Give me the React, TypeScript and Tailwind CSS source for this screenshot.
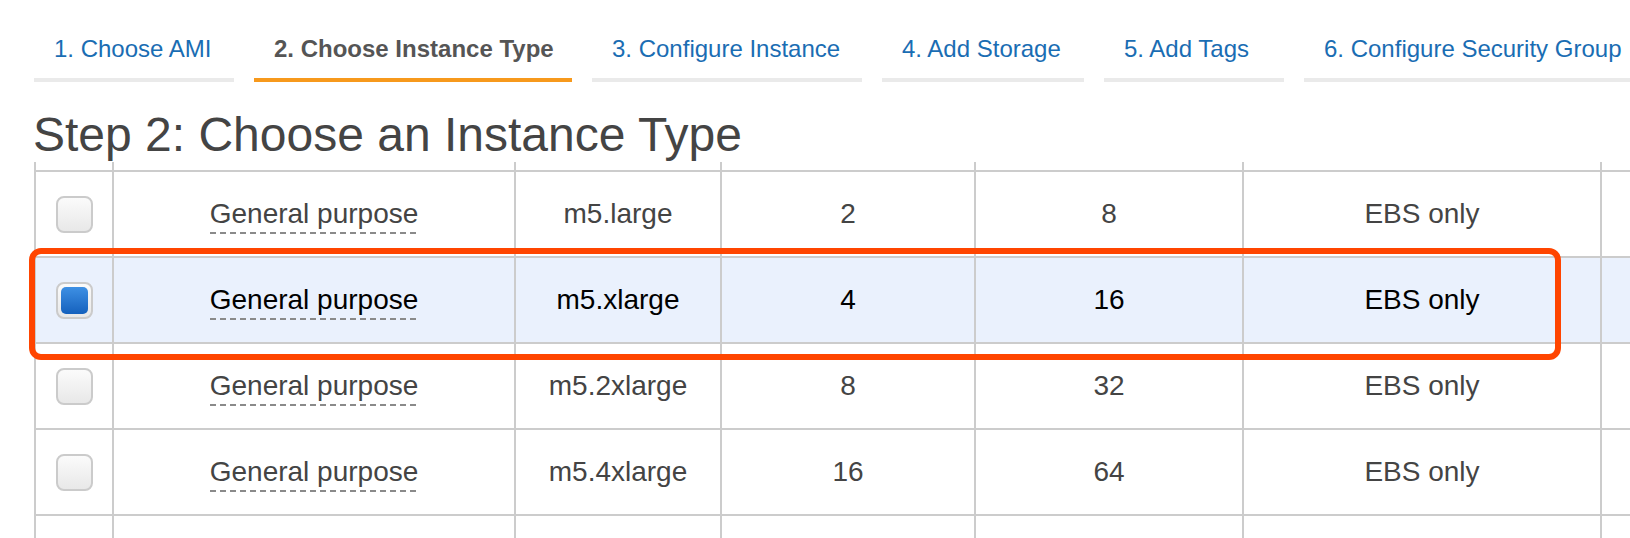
import React from "react";

const tabs = [
  { label: "1. Choose AMI", active: false, w: "w-[200px]" },
  { label: "2. Choose Instance Type", active: true, w: "w-[318px]" },
  { label: "3. Configure Instance", active: false, w: "w-[270px]" },
  { label: "4. Add Storage", active: false, w: "w-[202px]" },
  { label: "5. Add Tags", active: false, w: "w-[180px]" },
  { label: "6. Configure Security Group", active: false, w: "w-[340px]" },
];

const rows = [
  { type: "m5.large", cpu: "2", mem: "8", sel: false },
  { type: "m5.xlarge", cpu: "4", mem: "16", sel: true },
  { type: "m5.2xlarge", cpu: "8", mem: "32", sel: false },
  { type: "m5.4xlarge", cpu: "16", mem: "64", sel: false },
];

const grid =
  "grid grid-cols-[78px_402px_206px_254px_268px_358px_1fr]";
const cell = "border-l-2 border-[#cccccc] flex items-center justify-center";

function Checkbox({ checked }: { checked: boolean }) {
  return (
    <div className="w-[37px] h-[37px] rounded-[8px] border-2 border-[#cbcbcb] bg-linear-to-b from-[#fbfbfb] to-[#e8e8e8] p-[3px]">
      {checked && (
        <div className="w-full h-full rounded-[5px] bg-linear-to-b from-[#3e90e4] to-[#1461bd]" />
      )}
    </div>
  );
}

function Txt({ children, dashed }: { children: React.ReactNode; dashed?: boolean }) {
  return (
    <span
      className={
        "inline-block leading-[30px] pt-[4px] pb-[5px] whitespace-nowrap " +
        (dashed
          ? "bg-[repeating-linear-gradient(to_right,#8a8a8a_0px,#8a8a8a_6px,transparent_6px,transparent_10px)] bg-[length:100%_2px] bg-no-repeat bg-bottom"
          : "")
      }
    >
      {children}
    </span>
  );
}

export default function App() {
  return (
    <div className="relative w-[1630px] h-[538px] overflow-hidden bg-white font-['Liberation_Sans',Arial,sans-serif]">
      {/* Tabs */}
      <div className="flex gap-[20px] pl-[34px] pt-[35px] whitespace-nowrap">
        {tabs.map((t) => (
          <div
            key={t.label}
            className={
              "shrink-0 pl-[20px] pb-[15px] border-b-4 text-[24px] leading-[28px] " +
              t.w +
              " " +
              (t.active
                ? "border-[#f7991c] text-[#555555] font-bold"
                : "border-[#eaeaea] text-[#1a6db3]")
            }
          >
            {t.label}
          </div>
        ))}
      </div>

      {/* Heading */}
      <h1 className="mt-[26px] pl-[33px] text-[48px] leading-[54px] text-[#444444] font-normal whitespace-nowrap">
        Step 2: Choose an Instance Type
      </h1>

      {/* Table */}
      <div className="relative h-[376px] overflow-hidden pl-[34px] text-[28px]">
        <div className={grid + " h-[8px]"}>
          {Array.from({ length: 7 }).map((_, i) => (
            <div key={i} className="border-l-2 border-[#cccccc]" />
          ))}
        </div>
        {rows.map((r) => (
          <div
            key={r.type}
            className={
              grid +
              " h-[86px] border-t-2 border-[#cccccc] " +
              (r.sel ? "bg-[#eaf1fd] text-black" : "text-[#444444]")
            }
          >
            <div className={cell}>
              <Checkbox checked={r.sel} />
            </div>
            <div className={cell}>
              <Txt dashed>General purpose</Txt>
            </div>
            <div className={cell}>
              <Txt>{r.type}</Txt>
            </div>
            <div className={cell}>
              <Txt>{r.cpu}</Txt>
            </div>
            <div className={cell}>
              <Txt>{r.mem}</Txt>
            </div>
            <div className={cell}>
              <Txt>EBS only</Txt>
            </div>
            <div className={cell} />
          </div>
        ))}
        <div className={grid + " h-[40px] border-t-2 border-[#cccccc]"}>
          {Array.from({ length: 7 }).map((_, i) => (
            <div key={i} className="border-l-2 border-[#cccccc]" />
          ))}
        </div>

        {/* Annotation highlight */}
        <div className="absolute left-[29px] top-[86px] w-[1532px] h-[112px] border-[6px] border-[#ff4500] rounded-[12px] pointer-events-none" />
      </div>
    </div>
  );
}
